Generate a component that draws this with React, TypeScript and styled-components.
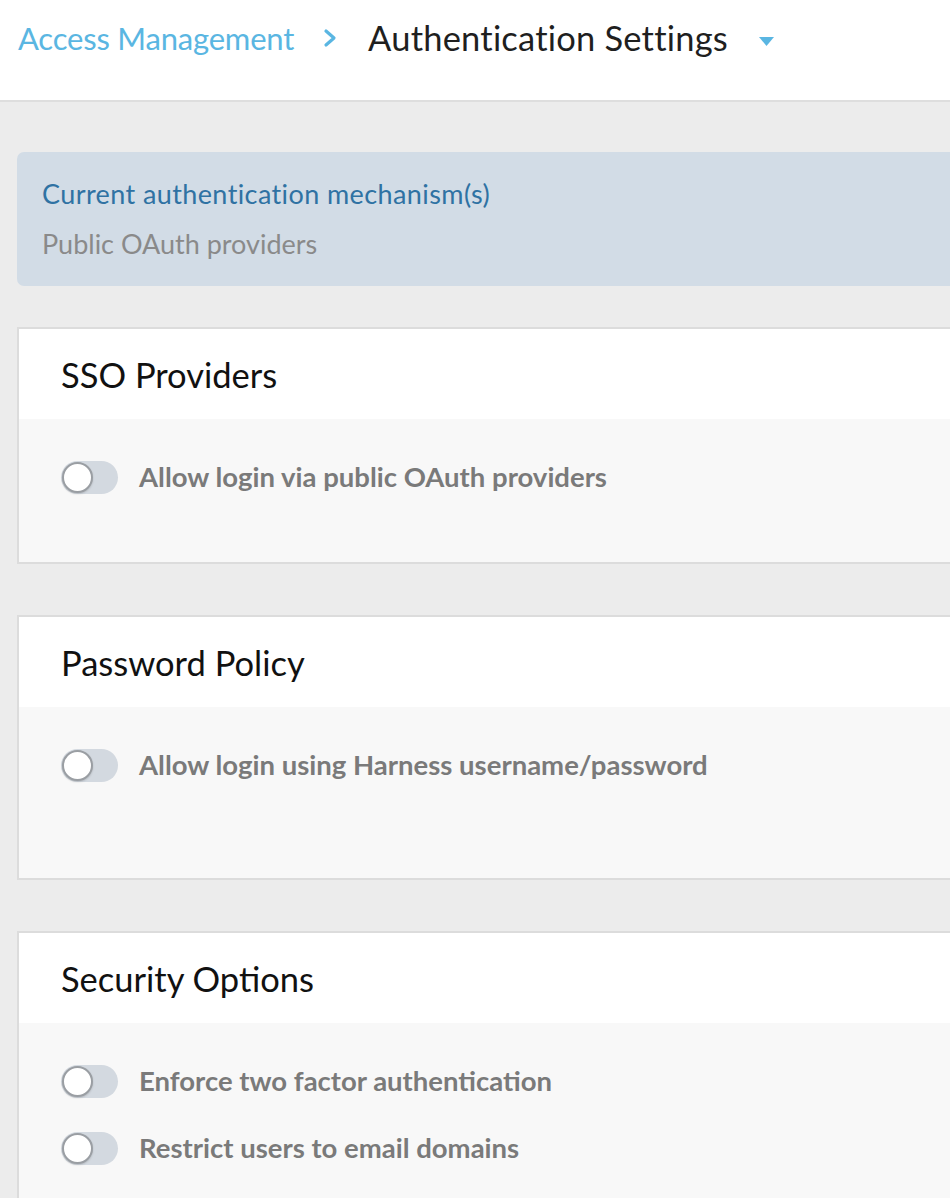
import React from "react";
import styled, { createGlobalStyle } from "styled-components";

const Global = createGlobalStyle`
  html, body { margin: 0; padding: 0; background: #ececec; overflow: hidden; }
  body { font-family: Lato, "Open Sans", sans-serif; }
  * { box-sizing: border-box; }
`;

const Page = styled.div`
  width: 1100px;
  min-height: 1198px;
  background: #ececec;
`;

const Header = styled.header`
  height: 102px;
  background: #fff;
  border-bottom: 2px solid #dedede;
  display: flex;
  align-items: flex-start;
  padding: 17px 0 0 18px;
`;

const Crumb = styled.span`
  font-size: 31px;
  font-weight: 400;
  color: #5ab6e2;
  line-height: 42px;
  letter-spacing: -0.2px;
`;

const Chevron = styled.svg`
  width: 16px;
  height: 20px;
  margin: 11px 30px 0 28px;
`;

const Title = styled.span`
  font-size: 34.5px;
  color: #1f1f1f;
  line-height: 42px;
  letter-spacing: 0.2px;
`;

const Caret = styled.svg`
  width: 15px;
  height: 9px;
  margin: 20px 0 0 31px;
`;

const Content = styled.main`
  padding: 50px 0 0 17px;
  display: flex;
  flex-direction: column;
  gap: 51px;
`;

const Info = styled.div`
  background: #d2dce6;
  border-radius: 7px;
  padding: 24px 25px 24px 25px;
  margin-bottom: -10px;
  display: flex;
  flex-direction: column;
  gap: 14px;
`;

const InfoTitle = styled.div`
  font-size: 27px;
  color: #2f72a3;
  line-height: 36px;
  letter-spacing: 0.4px;
`;

const InfoValue = styled.div`
  font-size: 27px;
  color: #8a8a8a;
  line-height: 36px;
`;

const Card = styled.section`
  border: 2px solid #dcdcdc;
  background: #f8f8f8;
`;

const CardHead = styled.div`
  background: #fff;
  height: 90px;
  display: flex;
  align-items: center;
  padding: 0 42px;
  font-size: 34.5px;
  color: #111;
`;

const CardBody = styled.div<{ $h: number }>`
  min-height: ${(p) => p.$h}px;
  padding: 41px 42px 0 42px;
  display: flex;
  flex-direction: column;
  gap: 33px;
`;

const Row = styled.label`
  display: flex;
  align-items: center;
  gap: 21px;
`;

const Track = styled.span`
  width: 57px;
  height: 33px;
  border-radius: 17px;
  background: #d3d9e0;
  position: relative;
  flex-shrink: 0;
`;

const Knob = styled.span`
  position: absolute;
  left: 1px;
  top: 1px;
  width: 31px;
  height: 31px;
  border-radius: 50%;
  background: #fff;
  border: 2px solid #9a9ea3;
  box-shadow: 0 1px 2px rgba(0,0,0,0.15);
`;

const Label = styled.span`
  font-size: 27.5px;
  font-weight: 700;
  color: #7a7a7a;
  line-height: 34px;
`;

const Toggle = ({ label }: { label: string }) => (
  <Row>
    <Track>
      <Knob />
    </Track>
    <Label>{label}</Label>
  </Row>
);

export default function App() {
  return (
    <Page>
      <Global />
      <Header>
        <Crumb>Access Management</Crumb>
        <Chevron viewBox="0 0 16 20">
          <path d="M4 3 L12 10 L4 17" fill="none" stroke="#5ab6e2" strokeWidth="3.2" strokeLinecap="round" strokeLinejoin="round" />
        </Chevron>
        <Title>Authentication Settings</Title>
        <Caret viewBox="0 0 15 9">
          <path d="M0 0 L15 0 L7.5 9 Z" fill="#5ab6e2" />
        </Caret>
      </Header>
      <Content>
        <Info>
          <InfoTitle>Current authentication mechanism(s)</InfoTitle>
          <InfoValue>Public OAuth providers</InfoValue>
        </Info>
        <Card>
          <CardHead>SSO Providers</CardHead>
          <CardBody $h={143}>
            <Toggle label="Allow login via public OAuth providers" />
          </CardBody>
        </Card>
        <Card>
          <CardHead>Password Policy</CardHead>
          <CardBody $h={171}>
            <Toggle label="Allow login using Harness username/password" />
          </CardBody>
        </Card>
        <Card>
          <CardHead>Security Options</CardHead>
          <CardBody $h={200}>
            <Toggle label="Enforce two factor authentication" />
            <Toggle label="Restrict users to email domains" />
          </CardBody>
        </Card>
      </Content>
    </Page>
  );
}
